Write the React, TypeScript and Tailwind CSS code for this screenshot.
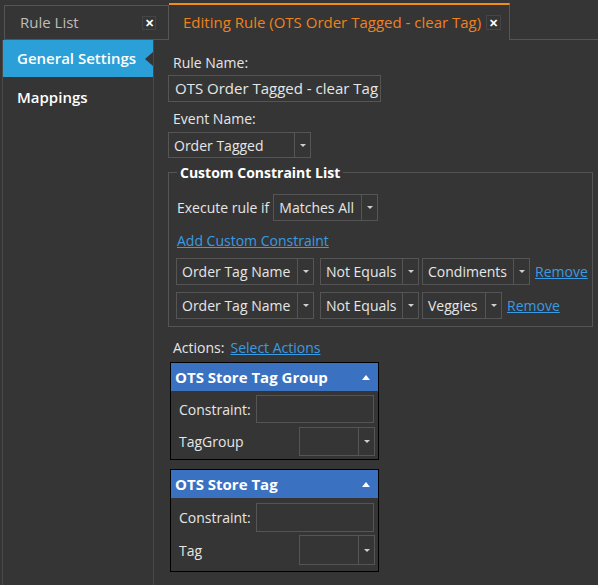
import React from "react";

const font = { fontFamily: '"Open Sans", "Noto Sans", Arial, sans-serif' };

function Caret() {
  return (
    <svg width="6" height="3" viewBox="0 0 6 3" className="block">
      <path d="M0 0H6L3 3Z" fill="#cfcfcf" />
    </svg>
  );
}

function Dropdown({ value, w, h = 27 }: { value?: string; w: number; h?: number }) {
  return (
    <div
      className="flex items-stretch border border-[#555555] bg-[#353535] text-[#e6e6e6]"
      style={{ width: w, height: h }}
    >
      <div className="flex-1 flex items-center pl-[5px] whitespace-nowrap overflow-hidden">{value}</div>
      <div className="w-[16px] border-l border-[#555555] flex items-center justify-center">
        <Caret />
      </div>
    </div>
  );
}

function ActionPanel({ title, label, tall }: { title: string; label: string; tall?: boolean }) {
  return (
    <div className="w-[209px] border border-black">
      <div className="h-[28px] bg-[#3a71c1] flex items-center justify-between pl-[4px] pr-[8px]">
        <span className="text-white font-bold text-[15px]">{title}</span>
        <svg width="8" height="5" viewBox="0 0 8 5">
          <path d="M0 5L4 0L8 5Z" fill="#ffffff" />
        </svg>
      </div>
      <div className={tall ? "pl-[8px] pr-[3px] pt-[5px] pb-[6px] flex flex-col gap-[3px]" : "pl-[8px] pr-[3px] pt-[4px] pb-[3px] flex flex-col gap-[4px]"}>
        <div className="flex items-center">
          <span className="w-[77px] text-[#e6e6e6]">Constraint:</span>
          <div className={tall ? "w-[118px] h-[29px] border border-[#555555]" : "w-[118px] h-[28px] border border-[#555555]"} />
        </div>
        <div className="flex items-center justify-between">
          <span className="text-[#e6e6e6]">{label}</span>
          <Dropdown w={76} h={tall ? 30 : 29} />
        </div>
      </div>
    </div>
  );
}

export default function App() {
  return (
    <div className="w-[598px] h-[585px] bg-[#353535] text-[14px] text-[#e6e6e6] overflow-hidden flex flex-col" style={font}>
      {/* Tab strip */}
      <div className="h-[40px] flex items-end pl-[4px]">
        <div className="w-[165px] h-[35px] border border-[#555555] flex items-center justify-between pl-[15px] pr-[12px]">
          <span className="text-[#bdbdbd] text-[15px]">Rule List</span>
          <div className="w-[14px] h-[14px] border border-[#454545] flex items-center justify-center text-white text-[11px] font-bold leading-none">
            ✕
          </div>
        </div>
        <div className="w-[341px] h-[37px] border-t-2 border-t-[#f28c16] border-r border-r-[#555555] flex items-center pl-[14px] gap-[5px]">
          <span className="text-[#f0821c] text-[15px]">Editing Rule (OTS Order Tagged - clear Tag)</span>
          <div className="w-[15px] h-[15px] border border-[#454545] flex items-center justify-center text-white text-[11px] font-bold leading-none">
            ✕
          </div>
        </div>
        <div className="flex-1 h-[1px] bg-[#555555]" />
      </div>

      {/* Body */}
      <div className="flex-1 flex">
        <div className="w-[154px] pl-[2px] bg-[#353535]">
          <div className="h-full border-l border-[#4a4a4a] border-r border-r-[#4a4a4a] flex flex-col">
            <div className="relative h-[37px] bg-[#2b9fd8] flex items-center pl-[14px]">
              <span className="text-white text-[15px] font-semibold">General Settings</span>
              <div className="absolute right-0 top-[12px] w-0 h-0 border-y-[7px] border-y-transparent border-r-[8px] border-r-[#353535]" />
            </div>
            <div className="h-[41px] flex items-center pl-[14px]">
              <span className="text-white text-[15px] font-semibold">Mappings</span>
            </div>
          </div>
        </div>

        <div className="flex-1 pl-[14px] pt-[12px] flex flex-col">
          <div className="pl-[5px] h-[20px] flex items-center">Rule Name:</div>
          <div className="mt-[3px] w-[213px] h-[27px] border border-[#555555] flex items-center pl-[6px] text-[15px] whitespace-nowrap">
            OTS Order Tagged - clear Tag
          </div>
          <div className="mt-[6px] pl-[5px] h-[20px] flex items-center">Event Name:</div>
          <div className="mt-[4px]">
            <Dropdown value="Order Tagged" w={143} h={26} />
          </div>

          {/* Custom Constraint List */}
          <div className="relative mt-[14px] w-[425px] h-[155px] border border-[#555555] pt-[21px] pl-[7px]">
            <div className="absolute left-[8px] top-[-11px] bg-[#353535] px-[3px] font-bold text-white">Custom Constraint List</div>
            <div className="flex items-center gap-[4px]">
              <span className="ml-[1px]">Execute rule if</span>
              <Dropdown value="Matches All" w={105} />
            </div>
            <div className="mt-[10px] ml-[1px] text-[#3a9be2] underline leading-[20px]">Add Custom Constraint</div>
            <div className="mt-[7px] flex items-center">
              <Dropdown value="Order Tag Name" w={138} />
              <div className="ml-[6px]"><Dropdown value="Not Equals" w={99} /></div>
              <div className="ml-[3px]"><Dropdown value="Condiments" w={108} /></div>
              <span className="ml-[5px] text-[#3a9be2] underline">Remove</span>
            </div>
            <div className="mt-[7px] flex items-center">
              <Dropdown value="Order Tag Name" w={138} />
              <div className="ml-[6px]"><Dropdown value="Not Equals" w={99} /></div>
              <div className="ml-[3px]"><Dropdown value="Veggies" w={80} /></div>
              <span className="ml-[5px] text-[#3a9be2] underline">Remove</span>
            </div>
          </div>

          <div className="mt-[10px] pl-[5px] flex items-center gap-[6px] h-[20px]">
            <span>Actions:</span>
            <span className="text-[#3a9be2] underline">Select Actions</span>
          </div>
          <div className="mt-[5px] pl-[2px] flex flex-col gap-[9px]">
            <ActionPanel title="OTS Store Tag Group" label="TagGroup" />
            <ActionPanel title="OTS Store Tag" label="Tag" tall />
          </div>
        </div>
      </div>
    </div>
  );
}
